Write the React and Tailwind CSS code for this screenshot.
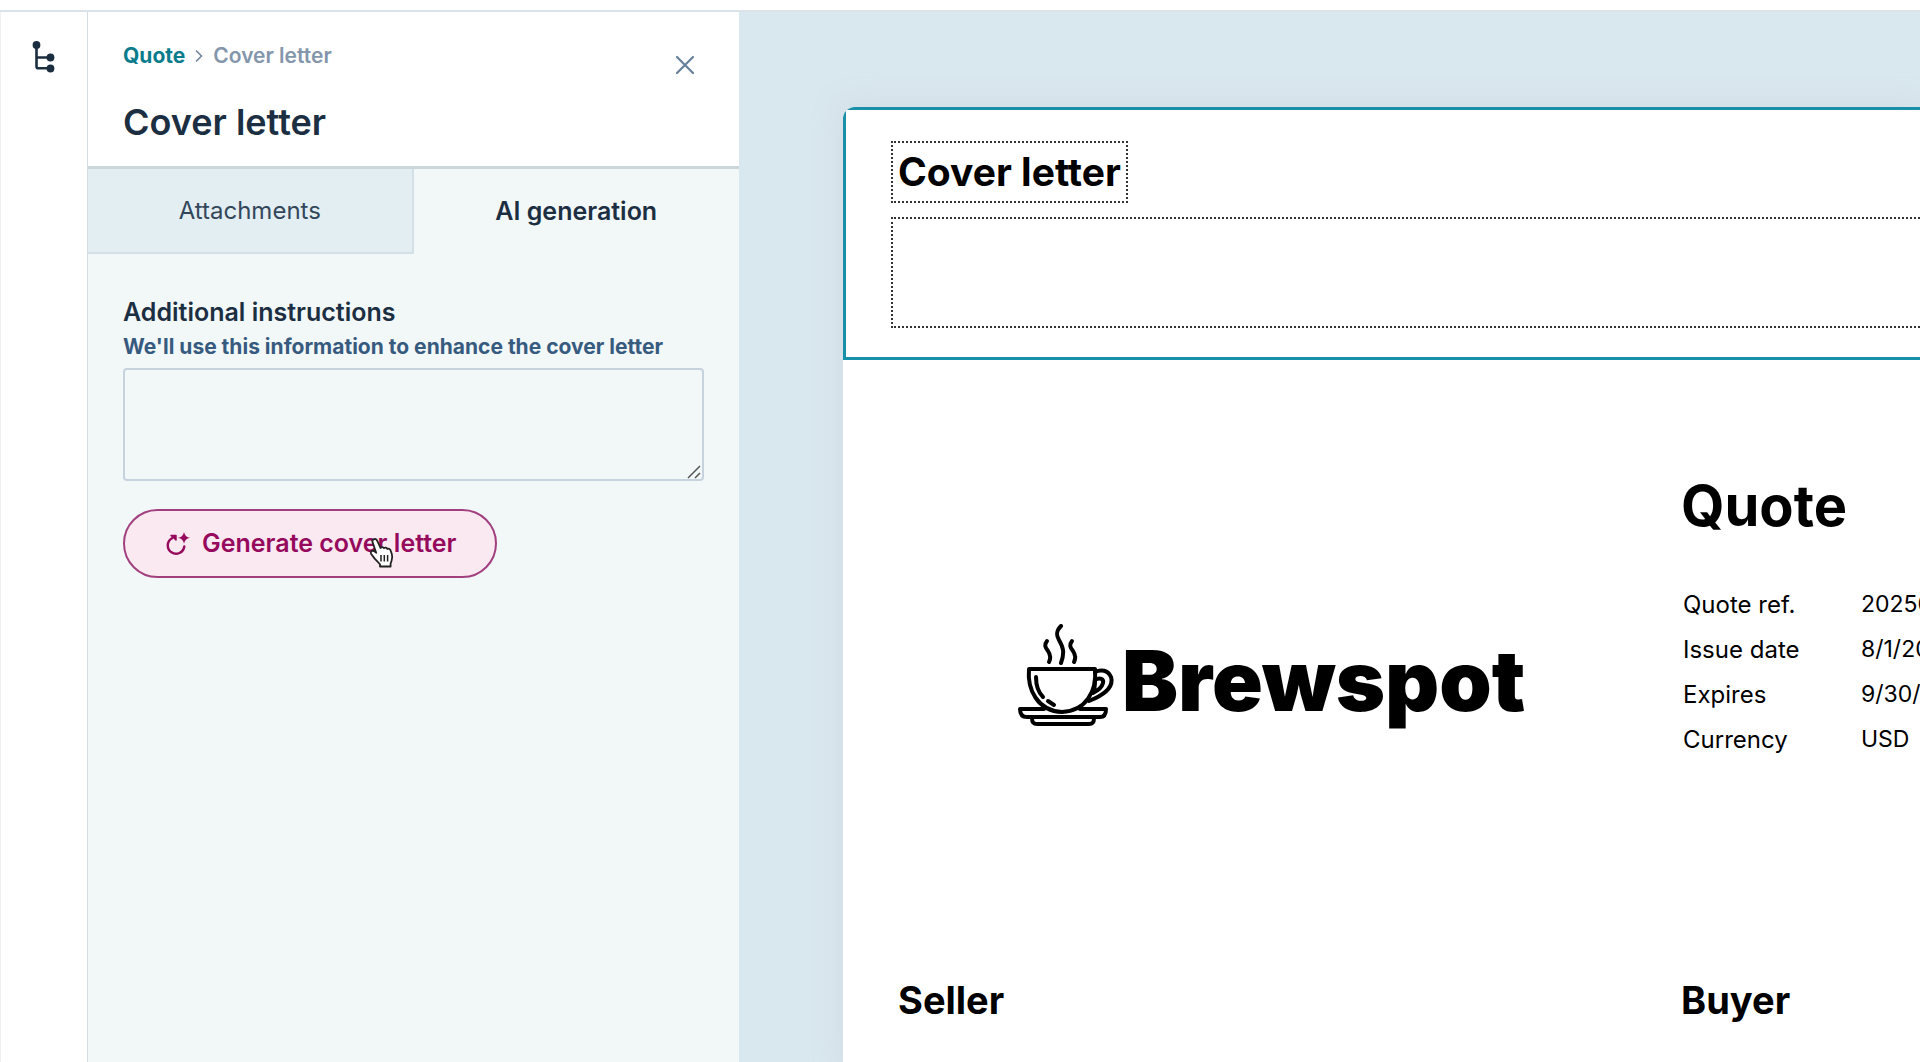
import { useState } from 'react';
import { ChevronRight } from 'lucide-react';

const TABS = ['Attachments', 'AI generation'];

const QUOTE_DETAILS = [
  { label: 'Quote ref.', value: '20250801' },
  { label: 'Issue date', value: '8/1/2025' },
  { label: 'Expires', value: '9/30/2025' },
  { label: 'Currency', value: 'USD' },
];

function TreeIcon() {
  return (
    <svg width="24" height="32" viewBox="0 0 24 32" fill="none" stroke="currentColor" strokeWidth="2.6" aria-hidden="true">
      <path d="M4.500 5v20.500q0 1.800 1.800 1.800H18M4.500 16.500h13" />
      <g fill="currentColor" stroke="none">
        <circle cx="4.500" cy="4" r="3.900" />
        <circle cx="18.500" cy="16.500" r="3.900" />
        <circle cx="18.500" cy="27.500" r="3.900" />
      </g>
    </svg>
  );
}

function RegenerateIcon() {
  return (
    <svg width="24" height="24" viewBox="0 0 24 24" aria-hidden="true" className="shrink-0">
      <path d="M6 6.200a8.300 8.300 0 1 0 12.300 8.300" fill="none" stroke="currentColor" strokeWidth="2.400" strokeLinecap="round" />
      <path d="M5 3.500h5v4.500z" fill="currentColor" stroke="currentColor" strokeWidth="1.500" strokeLinejoin="round" />
      <path d="M18 0q.9 5 6 5.800-5.100.8-6 6-.9-5.200-6-6 5.100-.8 6-5.800z" fill="currentColor" />
    </svg>
  );
}

function CloseIcon() {
  return (
    <svg width="20" height="28" viewBox="0 0 20 28" stroke="currentColor" strokeWidth="2.2" strokeLinecap="round" aria-hidden="true">
      <path d="M2 5l16 16M18 5L2 21" />
    </svg>
  );
}

function HandCursor() {
  return (
    <svg
      width="26"
      height="32"
      viewBox="0 0 26 32"
      aria-hidden="true"
      className="pointer-events-none absolute top-7 left-[246px]"
    >
      <path
        d="M5 2.2c1.500-.6 2.700.2 3.300 1.700L11.500 11c.8-1.200 2.800-1.200 3.500.2 1-.9 2.700-.6 3.300.8 1-.7 2.700-.2 3.200 1.200l1.300 3.800c.8 2.600.6 4.700-.2 6.800l-1 2.700v3H11v-2.200c-1.500-2-3.600-3.700-5.300-5.700L2.200 17c-.8-1.200-.3-2.700.8-3.100 1.500-.5 3 .4 4.200 1.900L3.600 5.400C3.100 4 3.700 2.700 5 2.200z"
        fill="#fff"
        stroke="#222"
        strokeWidth="1.8"
        strokeLinejoin="round"
      />
      <path d="M12 18v6.500M15.300 18v6.500M18.600 18v6.500" stroke="#222" strokeWidth="1.5" fill="none" />
    </svg>
  );
}

function CupLogo() {
  return (
    <svg
      width="98"
      height="102"
      viewBox="0 0 98 102"
      fill="none"
      stroke="#000"
      strokeWidth="4"
      strokeLinecap="round"
      strokeLinejoin="round"
      aria-hidden="true"
      className="shrink-0"
    >
      <path d="M43 2c-5 5-5 9-2 14 4 7 6 12 2 23" />
      <path d="M29 17c-3 4-2 6 1 10 2 3 3 7 1 11" />
      <path d="M54 17c-3 4-2 6 1 10 2 3 3 7 1 11" />
      <path d="M11 45h66c2 22-9 42-33 43C20 87 9 66 11 45z" />
      <path d="M77 48c6-3 13-2 16 5 3 10-7 18-22 24" />
      <path d="M77 56c5-3 9-1 8 3-1 4-4 7-10 10 2-4 2-8 2-13z" />
      <path d="M18 53c0 8 2 15 7 20M30 77l6 4" />
      <path d="M26 85H2c0 5 2 8 7 8h73c4 0 6-3 6-8H62" />
      <path d="M14 94c0 4 1 6 5 6h52c4 0 5-2 5-6" />
    </svg>
  );
}

function Sidebar() {
  return (
    <nav className="w-[88px] shrink-0 border-x border-r-[#d3dce3] border-l-[#eef1f3] bg-white pt-[29px]">
      <button type="button" aria-label="Document outline" className="mx-auto block text-[#1b2e40]">
        <TreeIcon />
      </button>
    </nav>
  );
}

function EditorPanel() {
  const [activeTab, setActiveTab] = useState('AI generation');
  const [instructions, setInstructions] = useState('');

  return (
    <aside className="w-[651px] shrink-0 bg-[#f2f7f8] text-[#1c2f42]">
      <header className="flex h-[157px] items-start justify-between border-b-3 border-[#cbd6da] bg-white pt-7 pr-11 pl-[35px]">
        <div>
          <div className="flex items-center text-[21px] leading-8 font-semibold">
            <a href="#quote" className="font-bold text-[#0b7c8c]">Quote</a>
            <ChevronRight className="mx-1 size-5 text-[#6d86a0]" strokeWidth={2} />
            <span className="text-[#8496ab]">Cover letter</span>
          </div>
          <h1 className="mt-[30px] text-[36px] leading-10 font-semibold">Cover letter</h1>
        </div>
        <button type="button" aria-label="Close" className="mt-3 text-[#66809b]">
          <CloseIcon />
        </button>
      </header>

      <div role="tablist" className="grid grid-cols-2">
        {TABS.map((tab) => (
          <button
            key={tab}
            type="button"
            role="tab"
            aria-selected={activeTab === tab}
            onClick={() => setActiveTab(tab)}
            className={
              activeTab === tab
                ? 'h-[85px] text-[25px] font-semibold'
                : 'h-[85px] border-r-2 border-b-2 border-[#d5e0e6] bg-[#e3eef3] text-2xl text-[#33475b]'
            }
          >
            {tab}
          </button>
        ))}
      </div>

      <div className="pt-[42px] pr-[35px] pl-[35px]">
        <label htmlFor="instructions" className="block text-[25px] leading-8 font-semibold">
          Additional instructions
        </label>
        <p id="instructions-hint" className="mt-[3px] text-[21px] leading-8 font-bold whitespace-nowrap text-[#375a7f]">
          We'll use this information to enhance the cover letter
        </p>
        <div className="relative mt-[5px]">
          <textarea
            id="instructions"
            aria-describedby="instructions-hint"
            value={instructions}
            onChange={(e) => setInstructions(e.target.value)}
            className="block h-[113px] w-full resize-none rounded-[4px] border-2 border-[#c6d2de] p-3 text-xl"
          />
          <svg
            width="14"
            height="14"
            viewBox="0 0 14 14"
            stroke="#555"
            strokeWidth="1.5"
            aria-hidden="true"
            className="pointer-events-none absolute right-[3px] bottom-[2px]"
          >
            <path d="M1 13 13 1M8 13l5-5" />
          </svg>
        </div>
        <div className="relative mt-7 w-fit">
          <button
            type="button"
            className="flex h-[69px] items-center gap-3 rounded-full border-2 border-[#a2407f] bg-[#fbe9f1] pr-[38px] pl-[41px] text-[25px] font-semibold text-[#960a5d]"
          >
            <RegenerateIcon />
            Generate cover letter
          </button>
          <HandCursor />
        </div>
      </div>
    </aside>
  );
}

function QuoteDocument() {
  return (
    <article className="min-h-full overflow-hidden rounded-tl-[12px] bg-white text-black shadow-[0_0_24px_2px_rgba(205,212,222,0.5)]">
      <section className="h-[253px] border-y-3 border-l-3 border-[#1990a9] pt-[31px] pl-[45px]">
        <h2 className="flex h-[62px] w-fit items-center border-2 border-dotted border-[#333] px-[5px] text-[39px] font-bold">
          Cover letter
        </h2>
        <div className="mt-[14px] h-[111px] border-2 border-r-0 border-dotted border-[#333]" />
      </section>

      <div className="grid grid-cols-[783px_1fr] pt-[110px] pl-[55px]">
        <div className="flex items-end pb-9 pl-[120px]">
          <CupLogo />
          <span className="ml-[6px] pb-[3px] text-[84px] leading-none font-black">Brewspot</span>
        </div>
        <div>
          <h2 className="text-[56px] leading-[72px] font-bold">Quote</h2>
          <table className="mt-10 text-2xl leading-[45px]">
            <tbody>
              {QUOTE_DETAILS.map(({ label, value }) => (
                <tr key={label}>
                  <th scope="row" className="w-[180px] min-w-[180px] pl-[2px] text-left font-normal">{label}</th>
                  <td className="text-[23px] leading-[45px] whitespace-nowrap">{value}</td>
                </tr>
              ))}
            </tbody>
          </table>
        </div>
        <h2 className="mt-[214px] text-[38px] leading-12 font-bold">Seller</h2>
        <h2 className="mt-[214px] text-[38px] leading-12 font-bold">Buyer</h2>
      </div>
    </article>
  );
}

export default function App() {
  return (
    <div className="flex h-screen flex-col overflow-hidden bg-white font-['Inter',sans-serif]">
      <div className="h-3 shrink-0 border-b-2 border-[#dbe3e8]" />
      <div className="flex min-h-0 flex-1">
        <Sidebar />
        <EditorPanel />
        <main className="min-w-0 flex-1 overflow-hidden bg-[#d9e7ee] pt-[95px] pl-[104px]">
          <QuoteDocument />
        </main>
      </div>
    </div>
  );
}
